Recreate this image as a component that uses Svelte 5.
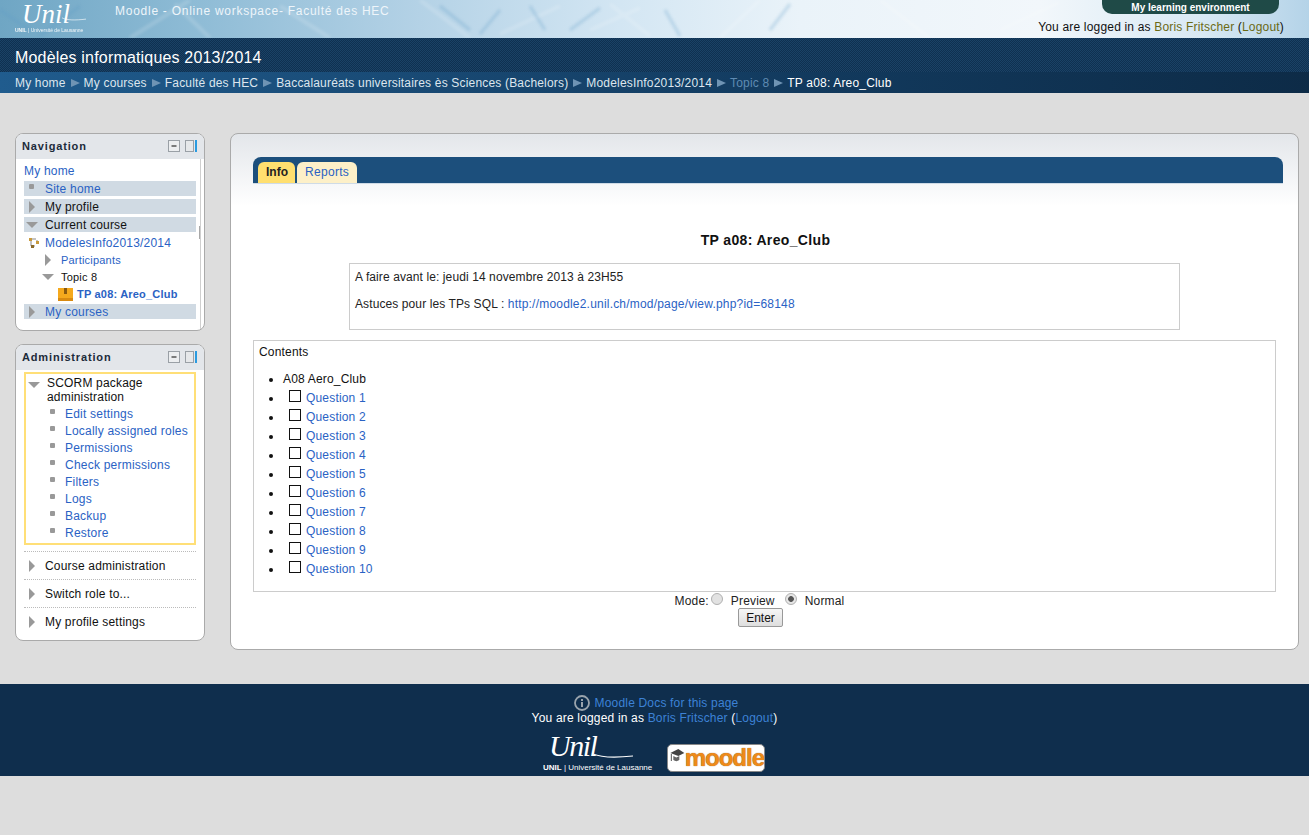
<script>
	const crumbs = [
		{ label: "My home" },
		{ label: "My courses" },
		{ label: "Faculté des HEC" },
		{ label: "Baccalauréats universitaires ès Sciences (Bachelors)" },
		{ label: "ModelesInfo2013/2014" },
		{ label: "Topic 8", dim: true },
		{ label: "TP a08: Areo_Club", current: true }
	];

	const scormLinks = ["Edit settings", "Locally assigned roles", "Permissions", "Check permissions", "Filters", "Logs", "Backup", "Restore"];
	const adminBranches = ["Course administration", "Switch role to...", "My profile settings"];
	const questions = [1, 2, 3, 4, 5, 6, 7, 8, 9, 10];
</script>

{#snippet blockControls()}
	<span class="controls">
		<svg width="13" height="13" viewBox="0 0 13 13">
			<rect x="0.5" y="0.5" width="11" height="11" fill="#eceef0" stroke="#9aa0a6" />
			<path d="M3.500 6h5" stroke="#555" stroke-width="1.400" />
		</svg>
		<svg width="13" height="13" viewBox="0 0 13 13">
			<rect x="0.5" y="0.5" width="8" height="11" fill="#e6e8ea" stroke="#9aa0a6" />
			<rect x="10" y="0" width="2" height="12" fill="#2a9be0" />
		</svg>
	</span>
{/snippet}

{#snippet unilLogo(small)}
	<span class="unil" class:small>
		<span class="unil-script">Unil</span>
		<svg class="swoosh" viewBox="0 0 60 8" preserveAspectRatio="none">
			<path d="M0 3C14 7 32 7 60 5" fill="none" stroke="#fff" stroke-width="1.200" />
		</svg>
		<span class="unil-sub"><b>UNIL</b> | Université de Lausanne</span>
	</span>
{/snippet}

<div class="page">
	<header>
		<svg class="decor" viewBox="0 0 1309 38" preserveAspectRatio="none">
			<g fill="none" stroke="#fff" stroke-opacity="0.16" stroke-width="4">
				<path d="M130 38L190 0M210 38L175 4M330 38L280 6M420 0L470 38M500 34L560 6" />
				<path d="M590 30L640 8M610 4L650 36M720 38L760 0M880 0L930 38M1000 30L1060 2" />
			</g>
			<g fill="none" stroke="#5d9ac4" stroke-opacity="0.28" stroke-width="3">
				<path d="M440 6L470 30M500 10L480 34M530 6L545 30M570 30L600 8M665 10L680 36" />
				<path d="M40 36L80 6M0 10L30 30M770 30L790 4" />
			</g>
		</svg>
		<div class="brand">
			{@render unilLogo(true)}
			<span class="site-name">Moodle - Online workspace- Faculté des HEC</span>
		</div>
		<div class="user-side">
			<span class="env-tab">My learning environment</span>
			<span class="login-info">You are logged in as <a href="#top">Boris Fritscher</a> (<a href="#top">Logout</a>)</span>
		</div>
	</header>

	<div class="course-band">Modèles informatiques 2013/2014</div>

	<nav class="crumbs">
		{#each crumbs as crumb, i}
			{#if i > 0}<i class="sep"></i>{/if}
			<span class:dim={crumb.dim} class:current={crumb.current}>{crumb.label}</span>
		{/each}
	</nav>

	<div class="columns">
		<aside>
			<section class="block">
				<div class="block-head"><h2>Navigation</h2>{@render blockControls()}</div>
				<div class="block-body nav-body">
					<div class="tree-row"><a href="#top">My home</a></div>
					<div class="tree-row hl"><span class="slot"><i class="dot"></i></span><a href="#top">Site home</a></div>
					<div class="tree-row hl"><span class="slot"><i class="closed"></i></span><span>My profile</span></div>
					<div class="tree-row hl"><span class="slot"><i class="open"></i></span><span>Current course</span></div>
					<div class="tree-row">
						<span class="slot">
							<svg width="12" height="12" viewBox="0 0 12 12">
								<path d="M3 2h5M3 3v6M4 9h3M9 3v3" stroke="#888" fill="none" />
								<rect x="1" y="1" width="3" height="3" fill="#c89a3c" />
								<rect x="8" y="4" width="3" height="3" fill="#c89a3c" />
								<rect x="3" y="8" width="3" height="3" fill="#8a6a2a" />
							</svg>
						</span>
						<a href="#top">ModelesInfo2013/2014</a>
					</div>
					<div class="tree-row sub"><span class="slot"><i class="closed"></i></span><a href="#top">Participants</a></div>
					<div class="tree-row sub"><span class="slot"><i class="open"></i></span><span>Topic 8</span></div>
					<div class="tree-row leaf">
						<span class="slot">
							<svg width="15" height="13" viewBox="0 0 15 13">
								<rect x="0" y="0" width="15" height="13" fill="#f5a91d" />
								<rect x="0" y="10" width="15" height="3" fill="#d98a10" />
								<rect x="6" y="0" width="3" height="6" fill="#8a5a10" />
							</svg>
						</span>
						<a href="#top">TP a08: Areo_Club</a>
					</div>
					<div class="tree-row hl"><span class="slot"><i class="closed"></i></span><a href="#top">My courses</a></div>
				</div>
			</section>

			<section class="block">
				<div class="block-head"><h2>Administration</h2>{@render blockControls()}</div>
				<div class="block-body admin-body">
					<div class="scorm">
						<div class="scorm-title"><i class="open"></i><span>SCORM package administration</span></div>
						<ul>
							{#each scormLinks as link}
								<li><i class="dot"></i><a href="#top">{link}</a></li>
							{/each}
						</ul>
					</div>
					{#each adminBranches as branch}
						<div class="branch"><i class="closed"></i><span>{branch}</span></div>
					{/each}
				</div>
			</section>
		</aside>

		<main>
			<div class="tabbar">
				<span class="tab active">Info</span>
				<a class="tab" href="#top">Reports</a>
			</div>
			<h1>TP a08: Areo_Club</h1>
			<div class="intro">
				<p>A faire avant le: jeudi 14 novembre 2013 à 23H55</p>
				<p>Astuces pour les TPs SQL : <a href="#top">http://moodle2.unil.ch/mod/page/view.php?id=68148</a></p>
			</div>
			<div class="toc">
				<div class="toc-title">Contents</div>
				<ul>
					<li>A08 Aero_Club</li>
					{#each questions as q}
						<li><i class="check"></i><a href="#top">Question {q}</a></li>
					{/each}
				</ul>
			</div>
			<form onsubmit={(e) => e.preventDefault()}>
				<div class="mode">
					<span>Mode:</span>
					<input type="radio" name="mode" />
					<span class="opt">Preview</span>
					<input type="radio" name="mode" checked />
					<span class="opt">Normal</span>
				</div>
				<button type="submit">Enter</button>
			</form>
		</main>
	</div>

	<footer>
		<div class="docs">
			<svg width="16" height="16" viewBox="0 0 16 16">
				<circle cx="8" cy="8" r="7" fill="none" stroke="#9aa4ad" stroke-width="1.800" />
				<rect x="7" y="7" width="2" height="5" fill="#9aa4ad" />
				<rect x="7" y="4" width="2" height="2" fill="#9aa4ad" />
			</svg>
			<a href="#top">Moodle Docs for this page</a>
		</div>
		<div class="foot-login">You are logged in as <a href="#top">Boris Fritscher</a> (<a href="#top">Logout</a>)</div>
		<div class="foot-logos">
			{@render unilLogo(false)}
			<span class="moodle-logo">
				<svg width="15" height="20" viewBox="0 0 14 20">
					<path d="M0 5L8 1l6 4-6 3z" fill="#444" />
					<path d="M3 8v4c2 1.500 4 1.500 6 0V8L6 9.500z" fill="#666" />
					<path d="M1 6v7" stroke="#555" />
				</svg>
				<span>moodle</span>
			</span>
		</div>
	</footer>
</div>

<style>
	:global(body) {
		background: #dddddd;
		font-family: "Liberation Sans", Arial, sans-serif;
		font-size: 12px;
		letter-spacing: 0.18px;
		color: #111;
	}

	.page {
		min-height: 835px;
	}

	a {
		color: #2a62c4;
		text-decoration: none;
	}

	i {
		display: block;
		flex: none;
	}

	header {
		position: relative;
		height: 38px;
		overflow: hidden;
		display: flex;
		justify-content: space-between;
		background: linear-gradient(90deg, #6fa6c4 0, #8fbcd6 200px, #b4d2e6 420px, #d3e6f3 620px, #eaf3f9 800px, #f2f7fb 1040px, #d9e9f4 1200px, #b4d3e8 100%);
	}

	.decor {
		position: absolute;
		inset: 0;
		width: 100%;
		height: 100%;
		filter: blur(1.5px);
	}

	.brand {
		position: relative;
		display: flex;
		align-items: flex-start;
		padding-left: 15px;
	}

	.site-name {
		margin: 4px 0 0 14px;
		color: #eef5fa;
		letter-spacing: 0.74px;
	}

	.unil {
		position: relative;
		display: flex;
		flex-direction: column;
		width: 110px;
		height: 38px;
		color: #fff;
	}

	.unil.small {
		width: 86px;
		height: 34px;
	}

	.unil-script {
		margin: 0 0 5px 6px;
		font: italic 30px/24px "Liberation Serif", serif;
		letter-spacing: -1.5px;
	}

	.small .unil-script {
		margin: 2px 0 0 7px;
		font-size: 27px;
		line-height: 24px;
		letter-spacing: 0;
	}

	.swoosh {
		position: absolute;
		left: 50px;
		top: 17px;
		width: 40px;
		height: 8px;
	}

	.small .swoosh {
		left: 47px;
		top: 16px;
		width: 24px;
		height: 5px;
	}

	.unil-sub {
		white-space: nowrap;
		font-size: 8px;
		line-height: 9px;
		letter-spacing: 0;
	}

	.small .unil-sub {
		font-size: 5px;
		line-height: 7px;
		margin-top: 1px;
		opacity: 0.9;
	}

	.user-side {
		position: relative;
		display: flex;
		flex-direction: column;
		align-items: flex-end;
		padding-right: 25px;
	}

	.env-tab {
		width: 177px;
		height: 14px;
		margin-right: 5px;
		border-radius: 0 0 10px 10px;
		background: #1f4a47;
		color: #fff;
		font-size: 10px;
		font-weight: bold;
		letter-spacing: 0;
		line-height: 15px;
		text-align: center;
	}

	.login-info {
		margin-top: 6px;
		line-height: 15px;
		white-space: nowrap;
	}

	.login-info a {
		color: #6b6a14;
	}

	.course-band {
		height: 34px;
		padding-left: 15px;
		color: #fff;
		font-size: 16px;
		line-height: 40px;
		background: repeating-conic-gradient(#0f3050 0 25%, #1a4266 0 50%) 0 0 / 2px 2px;
	}

	.crumbs {
		height: 21px;
		display: flex;
		align-items: center;
		padding-left: 15px;
		color: #dde6ee;
		white-space: nowrap;
		background: linear-gradient(90deg, #205c8e 0, #17466f 500px, #123a5e 800px, #0d2b47 100%);
	}

	.crumbs .dim {
		color: #5f8bb2;
	}

	.crumbs .current {
		color: #fff;
	}

	.sep {
		width: 0;
		height: 0;
		margin: 0 4px 0 5px;
		border-left: 9px solid #6f94b4;
		border-top: 4px solid transparent;
		border-bottom: 4px solid transparent;
	}

	.columns {
		display: flex;
		align-items: flex-start;
		gap: 25px;
		padding: 40px 10px 34px 15px;
	}

	aside {
		flex: none;
		width: 190px;
		display: flex;
		flex-direction: column;
		gap: 13px;
	}

	.block {
		border: 1px solid #aaaaaa;
		border-radius: 8px;
		background: #fff;
		overflow: hidden;
	}

	.block-head {
		height: 25px;
		box-sizing: border-box;
		display: flex;
		align-items: center;
		justify-content: space-between;
		padding: 0 6px 2px;
		background: #e3e6ea;
	}

	h2 {
		margin: 0;
		font-size: 11px;
		letter-spacing: 0.85px;
		color: #1c2b3a;
	}

	.controls {
		display: flex;
		gap: 4px;
		margin-top: 2px;
	}

	.block-body {
		padding: 0 8px;
	}

	.nav-body {
		position: relative;
		height: 171px;
		padding-top: 4px;
		box-sizing: border-box;
	}

	.nav-body::after {
		content: "";
		position: absolute;
		top: 0;
		bottom: 0;
		right: 3px;
		width: 1px;
		background: #cfcfcf;
	}

	.nav-body::before {
		content: "";
		position: absolute;
		top: 67px;
		right: 3px;
		width: 2px;
		height: 13px;
		background: #a8a8a8;
	}

	.tree-row {
		height: 15px;
		margin-bottom: 3px;
		display: flex;
		align-items: center;
		line-height: 15px;
		white-space: nowrap;
		letter-spacing: 0.2px;
	}

	.tree-row > a,
	.tree-row > span:not(.slot) {
		margin-top: 2px;
	}

	.slot {
		flex: none;
		width: 21px;
		height: 15px;
		display: flex;
		align-items: center;
		padding-left: 4px;
		box-sizing: border-box;
	}

	.hl {
		background: #d0dae3;
	}

	.tree-row.sub {
		height: 14px;
		font-size: 11px;
		margin-left: 16px;
	}

	.tree-row.sub > a,
	.tree-row.sub > span:not(.slot) {
		margin-top: 0;
	}

	.tree-row.leaf {
		height: 14px;
		margin-left: 34px;
		font-size: 11px;
		font-weight: bold;
	}

	.tree-row.leaf > a {
		margin-top: 0;
	}

	.leaf .slot {
		width: 19px;
		padding-left: 0;
	}

	.dot {
		width: 5px;
		height: 5px;
		margin: 0 0 4px 1px;
		border-radius: 1px;
		background: #999;
	}

	.closed {
		width: 0;
		height: 0;
		margin-left: 1px;
		border-left: 6px solid #999;
		border-top: 6px solid transparent;
		border-bottom: 6px solid transparent;
	}

	.open {
		width: 0;
		height: 0;
		margin-left: -2px;
		border-top: 6px solid #999;
		border-left: 6px solid transparent;
		border-right: 6px solid transparent;
	}

	.admin-body {
		height: 270px;
		box-sizing: border-box;
		padding-top: 2px;
	}

	.scorm {
		border: 2px solid #ffdf77;
		padding: 2px 0;
		height: 173px;
		box-sizing: border-box;
	}

	.scorm-title {
		display: flex;
		align-items: flex-start;
		gap: 7px;
		padding-left: 2px;
		line-height: 14px;
	}

	.scorm-title .open {
		margin: 6px 0 0;
	}

	.scorm ul {
		list-style: none;
		margin: 1px 0 0;
		padding: 0;
	}

	.scorm li {
		display: flex;
		align-items: center;
		gap: 10px;
		height: 17px;
		padding-left: 23px;
		white-space: nowrap;
		letter-spacing: 0.22px;
	}

	.branch {
		height: 27px;
		display: flex;
		align-items: center;
		gap: 10px;
		padding-left: 4px;
		border-top: 1px dotted #bbb;
	}

	.scorm + .branch {
		margin-top: 6px;
	}

	main {
		flex: 1;
		box-sizing: border-box;
		height: 517px;
		padding: 23px 15px 0 22px;
		border: 1px solid #aaaaaa;
		border-radius: 8px;
		background: linear-gradient(#e3e6ea 0, #fff 72px);
	}

	.tabbar {
		height: 27px;
		box-sizing: border-box;
		display: flex;
		align-items: flex-end;
		gap: 2px;
		padding-left: 5px;
		border-radius: 8px 8px 0 0;
		border-bottom: 1px solid #cfdbe6;
		background: #1c4f7c;
	}

	.tab {
		height: 21px;
		padding: 0 8px;
		border-radius: 6px 6px 0 0;
		background: #fdf0c8;
		line-height: 21px;
		letter-spacing: 0.3px;
	}

	.tab.active {
		padding: 0 7px 0 8px;
		background: #ffdf6f;
		color: #222;
		font-weight: bold;
		letter-spacing: 0;
	}

	h1 {
		margin: 48px 5px 15px 0;
		font-size: 14px;
		line-height: 16px;
		letter-spacing: 0.35px;
		text-align: center;
	}

	.intro {
		width: 829px;
		height: 65px;
		margin-left: 96px;
		border: 1px solid #cccccc;
		color: #222;
		letter-spacing: 0.1px;
	}

	.intro a {
		letter-spacing: 0.2px;
	}

	.intro p {
		margin: 6px 5px 13px;
		line-height: 14px;
	}

	.toc {
		height: 250px;
		margin: 10px 7px 0 0;
		border: 1px solid #cccccc;
	}

	.toc-title {
		margin: 4px 5px 0;
		line-height: 14px;
	}

	.toc ul {
		margin: 12px 0 0;
		padding-left: 29px;
	}

	.toc li {
		height: 19px;
		line-height: 15px;
	}

	.toc li:first-child {
		line-height: 17px;
	}

	.check {
		display: inline-block;
		box-sizing: border-box;
		width: 12px;
		height: 12px;
		margin: 0 5px -1px 6px;
		border: 1px solid #111;
		vertical-align: 1px;
	}

	form {
		display: flex;
		flex-direction: column;
		align-items: center;
		margin-right: 17px;
	}

	.mode {
		display: flex;
		align-items: center;
		height: 18px;
		margin-bottom: -2px;
		color: #222;
	}

	input[type="radio"] {
		appearance: none;
		box-sizing: border-box;
		width: 12px;
		height: 12px;
		margin: -5px 0 0 2px;
		border: 1px solid #b0b0b0;
		border-radius: 50%;
		background: #e2e2e2;
	}

	input[type="radio"]:checked {
		background: radial-gradient(circle, #555 0 2.500px, #e6e6e6 3.200px);
	}

	.opt {
		margin: 0 8px;
	}

	.opt:last-child {
		margin-right: 0;
	}

	button {
		height: 19px;
		width: 45px;
		margin-left: 2px;
		padding: 0;
		border: 1px solid #999;
		border-radius: 2px;
		background: linear-gradient(#f6f6f6, #dedede);
		font: 12px "Liberation Sans", Arial, sans-serif;
		color: #111;
	}

	footer {
		height: 92px;
		display: flex;
		flex-direction: column;
		align-items: center;
		background: #0f2e4d;
		color: #fff;
		box-sizing: border-box;
	}

	footer a {
		color: #3d82d6;
	}

	.docs {
		display: flex;
		align-items: center;
		gap: 5px;
		height: 16px;
		margin-top: 11px;
		padding-left: 3px;
	}

	.foot-login {
		line-height: 15px;
	}

	.foot-logos {
		display: flex;
		align-items: flex-start;
		gap: 14px;
		margin-top: 8px;
		padding-right: 1px;
	}

	.moodle-logo {
		display: flex;
		align-items: center;
		width: 98px;
		height: 28px;
		margin-top: 10px;
		box-sizing: border-box;
		padding-left: 2px;
		border: 1px solid #888;
		border-radius: 5px;
		background: #fff;
		color: #ee8a1a;
		font-size: 24px;
		font-weight: bold;
		letter-spacing: -1px;
		text-shadow: 0 0 1px #8a4a00;
		overflow: hidden;
	}
</style>
